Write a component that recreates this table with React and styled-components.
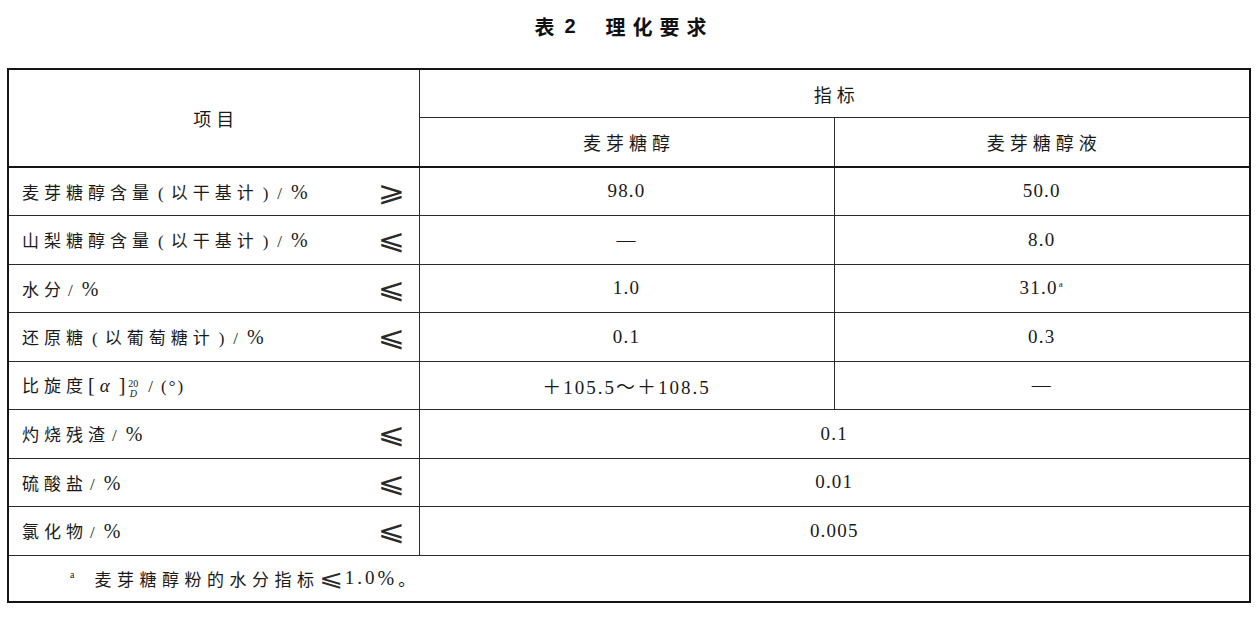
import styled, { createGlobalStyle } from 'styled-components';

const GlobalStyle = createGlobalStyle`
  html, body {
    margin: 0;
    padding: 0;
    background: #fff;
  }
  body {
    width: 1257px;
    height: 618px;
    overflow: hidden;
    color: #1a1a1a;
    font-family: "Liberation Serif", "Noto Sans CJK SC", serif;
  }
`;

const Page = styled.div`
  display: flex;
  flex-direction: column;
  padding: 12px 0 0 7px;
`;

const Title = styled.h1`
  margin: 0;
  height: 28px;
  display: flex;
  justify-content: center;
  align-items: center;
  padding-right: 16px;
  font-family: "Noto Sans CJK SC", sans-serif;
  font-size: 20px;
  font-weight: 700;
  letter-spacing: 7px;
  color: #111;
`;

const TitleNum = styled.span`
  font-family: "Liberation Sans", "Noto Sans CJK SC", sans-serif;
  margin: 0 30px 0 3px;
  letter-spacing: 0;
`;

const Table = styled.table`
  margin-top: 28px;
  width: 1242px;
  border-collapse: collapse;
  table-layout: fixed;
  border: 2px solid #151515;
`;

const Cell = styled.td`
  border: 1px solid #2b2b2b;
  border-bottom-width: ${({ $thick }) => ($thick ? '2px' : '1px')};
  border-bottom-color: ${({ $thick }) => ($thick ? '#151515' : '#2b2b2b')};
  height: ${({ $h }) => $h || 47}px;
  padding: 0;
  text-align: ${({ $left }) => ($left ? 'left' : 'center')};
  vertical-align: middle;
  font-size: 18px;
`;

const HeadText = styled.span`
  font-family: "Noto Sans CJK SC", sans-serif;
  font-size: 18px;
  letter-spacing: 5px;
  margin-right: -5px;
`;

const Label = styled.div`
  display: flex;
  align-items: center;
  justify-content: space-between;
  padding: 0 14px 0 13px;
  font-family: "Noto Sans CJK SC", sans-serif;
  font-size: 17px;
  letter-spacing: 5px;
`;

const Punct = styled.span`
  font-family: "Liberation Serif", serif;
  font-size: ${({ $size }) => $size || 17}px;
  letter-spacing: 0;
  margin: 0 ${({ $r }) => $r ?? 4}px 0 ${({ $l }) => $l ?? 0}px;
`;

const Sign = styled.span`
  display: inline-block;
  font-family: "DejaVu Sans", sans-serif;
  font-size: 25px;
  line-height: 1;
  letter-spacing: 0;
  color: #2a2a2a;
  transform: scale(1.3, 1.1);
  transform-origin: right center;
`;

const Value = styled.span`
  font-family: "Liberation Serif", "Noto Sans CJK SC", serif;
  font-size: 19px;
  letter-spacing: ${({ $wide }) => ($wide ? 2 : 1.2)}px;
`;

const Sup = styled.sup`
  font-size: 9px;
  vertical-align: 7px;
  margin-left: 1px;
`;

const Stack = styled.span`
  display: inline-flex;
  flex-direction: column;
  align-items: center;
  font-family: "Liberation Serif", serif;
  font-size: 10px;
  line-height: 10px;
  letter-spacing: 0;
  margin: 0 10px 0 3px;
  vertical-align: 5px;
`;

const StackSub = styled.i`
  font-style: italic;
`;

const Greek = styled.i`
  font-family: "Liberation Serif", serif;
  font-size: 19px;
  font-style: italic;
  margin: 0 9px 0 5px;
  letter-spacing: 0;
`;

const Note = styled.div`
  display: flex;
  align-items: center;
  padding-left: 61px;
  font-family: "Noto Sans CJK SC", sans-serif;
  font-size: 17px;
  letter-spacing: 5.5px;
`;

const NoteMark = styled.span`
  font-family: "Liberation Serif", serif;
  font-size: 10px;
  letter-spacing: 0;
  margin: -8px 20px 0 0;
`;

const Lte = styled.span`
  display: inline-block;
  font-family: "DejaVu Sans", sans-serif;
  font-size: 23px;
  line-height: 1;
  letter-spacing: 0;
  color: #2a2a2a;
  transform: scaleX(1.25);
  transform-origin: left center;
  margin: 0 6px 0 0;
`;

const Num = styled.span`
  font-family: "Liberation Serif", serif;
  font-size: 19px;
  letter-spacing: 3px;
`;

const Percent = styled.span`
  font-family: "Liberation Serif", serif;
  font-size: 20px;
  letter-spacing: 0;
  margin-right: ${({ $r }) => $r ?? 0}px;
`;

const rows = [
  { name: '麦芽糖醇含量', basis: '以干基计', sign: '⩾', a: '98.0', b: '50.0' },
  { name: '山梨糖醇含量', basis: '以干基计', sign: '⩽', a: '—', b: '8.0' },
  { name: '水分', sign: '⩽', a: '1.0', b: '31.0', bNote: true },
  { name: '还原糖', basis: '以葡萄糖计', sign: '⩽', a: '0.1', b: '0.3' },
  { rotation: true, a: '＋105.5～＋108.5', b: '—' },
  { name: '灼烧残渣', sign: '⩽', span: '0.1' },
  { name: '硫酸盐', sign: '⩽', span: '0.01' },
  { name: '氯化物', sign: '⩽', span: '0.005' },
];

function RowLabel({ row }) {
  if (row.rotation) {
    return (
      <Label>
        <span>
          比旋度
          <Punct $size={20} $r={0} $l={0}>[</Punct>
          <Greek>α</Greek>
          <Punct $size={20} $r={0}>]</Punct>
          <Stack>
            <span>20</span>
            <StackSub>D</StackSub>
          </Stack>
          <Punct $r={8}>/</Punct>
          <Punct $r={2}>(</Punct>
          <Punct $r={2}>°</Punct>
          <Punct $r={0}>)</Punct>
        </span>
      </Label>
    );
  }
  return (
    <Label>
      <span>
        {row.name}
        {row.basis && (
          <>
            <Punct $l={4} $r={7}>(</Punct>
            {row.basis}
            <Punct $l={4} $r={7}>)</Punct>
          </>
        )}
        <Punct $l={2} $r={9}>/</Punct>
        <Percent>%</Percent>
      </span>
      <Sign>{row.sign}</Sign>
    </Label>
  );
}

export default function App() {
  return (
    <>
      <GlobalStyle />
      <Page>
        <Title>
          表<TitleNum>2</TitleNum>理化要求
        </Title>
        <Table>
          <colgroup>
            <col style={{ width: 411 }} />
            <col style={{ width: 415 }} />
            <col style={{ width: 416 }} />
          </colgroup>
          <thead>
            <tr>
              <Cell rowSpan={2} $thick>
                <HeadText>项目</HeadText>
              </Cell>
              <Cell colSpan={2} $h={47}>
                <HeadText>指标</HeadText>
              </Cell>
            </tr>
            <tr>
              <Cell $thick $h={47.5}>
                <HeadText>麦芽糖醇</HeadText>
              </Cell>
              <Cell $thick $h={47.5}>
                <HeadText>麦芽糖醇液</HeadText>
              </Cell>
            </tr>
          </thead>
          <tbody>
            {rows.map((row, i) => (
              <tr key={i}>
                <Cell $h={47.5}>
                  <RowLabel row={row} />
                </Cell>
                {row.span ? (
                  <Cell colSpan={2} $h={47.5}>
                    <Value>{row.span}</Value>
                  </Cell>
                ) : (
                  <>
                    <Cell $h={47.5}>
                      <Value $wide={row.rotation}>{row.a}</Value>
                    </Cell>
                    <Cell $h={47.5}>
                      <Value>
                        {row.b}
                        {row.bNote && <Sup>a</Sup>}
                      </Value>
                    </Cell>
                  </>
                )}
              </tr>
            ))}
            <tr>
              <Cell colSpan={3} $h={45.5} $left>
                <Note>
                  <NoteMark>a</NoteMark>
                  麦芽糖醇粉的水分指标<Lte>⩽</Lte>
                  <Num>1.0</Num>
                  <Percent $r={4}>%</Percent>。
                </Note>
              </Cell>
            </tr>
          </tbody>
        </Table>
      </Page>
    </>
  );
}
